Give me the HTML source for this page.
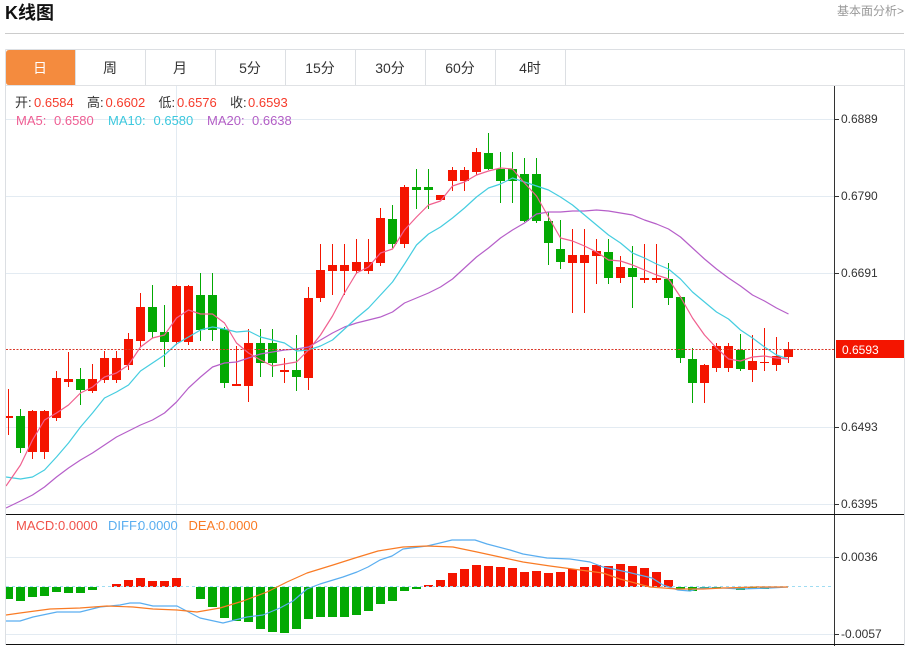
<!DOCTYPE html>
<html lang="zh"><head><meta charset="utf-8"><title>K线图</title>
<style>
html,body{margin:0;padding:0;background:#fff;width:911px;height:646px;overflow:hidden}
svg{position:absolute;left:0;top:0;display:block}
text{font-family:"Liberation Sans","Noto Sans CJK SC",sans-serif}
</style></head><body>
<svg width="911" height="646" viewBox="0 0 911 646" xmlns="http://www.w3.org/2000/svg">
<defs><clipPath id="c"><rect x="6" y="86" width="828" height="560"/></clipPath></defs>
<text x="5" y="19" font-size="18" font-weight="700" fill="#111">K线图</text>
<text x="837" y="15" font-size="12" fill="#999">基本面分析&gt;</text>
<rect x="5" y="33" width="899" height="1" fill="#ccc"/>
<path d="M5.5 49.5H904.5V645.5M5.5 49.5V645" fill="none" stroke="#dcdfe3"/>
<path d="M6 85.500H904" stroke="#e0e2e5"/>
<path d="M6 53q0-3 3-3H75V85H9q-3 0-3-3z" fill="#f48b3e"/>
<path d="M75.500 50V85M145.500 50V85M215.500 50V85M285.500 50V85M355.500 50V85M425.500 50V85M495.500 50V85M565.500 50V85" stroke="#dcdfe3"/>
<g font-size="14" text-anchor="middle" fill="#333">
<text x="40" y="73" fill="#fff">日</text><text x="110" y="73">周</text><text x="180" y="73">月</text><text x="250" y="73">5分</text><text x="320" y="73">15分</text><text x="390" y="73">30分</text><text x="460" y="73">60分</text><text x="530" y="73">4时</text>
</g>
<path d="M6 119.500H834M6 196.500H834M6 273.500H834M6 427.500H834M6 504.500H834M6 557.500H834M6 634.500H834M176.500 86V644" stroke="#e3ebf2"/>
<g clip-path="url(#c)">
<g stroke="#f41500" fill="none">
<path d="M8.500 389V435M32.500 410V459M44.500 410V459M56.500 371V421M68.500 352V387M92.500 364V393M104.500 351V383M116.500 351V383M128.500 333V370M140.500 293V347M176.500 285V345M188.500 285V345M236.500 346V386M248.500 329V402M284.500 358V383M308.500 287V390M320.500 244V302M332.500 244V295M344.500 244V295M356.500 239V274M368.500 239V274M380.500 208V266M404.500 185V248M452.500 167V191M464.500 167V191M476.500 148V175M572.500 229V313M584.500 229V313M596.500 239V284M620.500 256V283M644.500 244V283M656.500 244V283M704.500 364V403M716.500 343V372M728.500 343V372M752.500 335V382M764.500 328V371M776.500 337V371M788.500 342V363"/>
</g>
<path fill="#f41500" d="M4 416h9v2h-9zM28 411h9v41h-9zM40 411h9v41h-9zM52 378h9v40h-9zM64 379h9v3h-9zM88 379h9v12h-9zM100 358h9v22h-9zM112 358h9v22h-9zM124 339h9v26h-9zM136 307h9v34h-9zM172 286h9v56h-9zM184 286h9v56h-9zM232 384h9v2h-9zM244 343h9v43h-9zM280 370h9v2h-9zM304 298h9v80h-9zM316 270h9v28h-9zM328 265h9v6h-9zM340 265h9v6h-9zM352 262h9v9h-9zM364 262h9v9h-9zM376 218h9v45h-9zM400 187h9v57h-9zM436 195h9v5h-9zM448 170h9v11h-9zM460 170h9v11h-9zM472 152h9v20h-9zM568 255h9v8h-9zM580 255h9v8h-9zM592 251h9v5h-9zM616 267h9v11h-9zM640 278h9v2h-9zM652 278h9v2h-9zM700 365h9v18h-9zM712 346h9v22h-9zM724 346h9v22h-9zM748 361h9v9h-9zM760 362h9v1h-9zM772 356h9v9h-9zM784 349h9v8h-9z"/>
<g stroke="#03a903" fill="none">
<path d="M20.500 409V453M80.500 368V405M152.500 285V338M164.500 305V367M200.500 273V341M212.500 273V341M224.500 327V388M260.500 329V377M272.500 329V377M296.500 335V391M392.500 205V248M416.500 169V209M428.500 169V209M488.500 133V170M500.500 152V203M512.500 152V203M524.500 158V222M536.500 158V223M548.500 212V265M560.500 220V269M608.500 239V284M632.500 246V308M668.500 263V305M680.500 296V363M692.500 348V403M740.500 334V371"/>
</g>
<path fill="#03a903" d="M16 416h9v32h-9zM76 379h9v11h-9zM148 307h9v25h-9zM160 332h9v10h-9zM196 295h9v35h-9zM208 295h9v35h-9zM220 329h9v54h-9zM256 343h9v20h-9zM268 343h9v20h-9zM292 370h9v7h-9zM388 219h9v25h-9zM412 187h9v3h-9zM424 187h9v3h-9zM484 153h9v16h-9zM496 169h9v12h-9zM508 169h9v12h-9zM520 174h9v47h-9zM532 174h9v47h-9zM544 221h9v22h-9zM556 249h9v13h-9zM604 252h9v26h-9zM628 268h9v9h-9zM664 279h9v19h-9zM676 297h9v61h-9zM688 359h9v24h-9zM736 350h9v19h-9z"/>
<g fill="none" stroke-width="1.200" stroke-linejoin="round">
<polyline stroke="#b65fc9" points="6,508 20.500,501 32.500,495 44.500,487 56.500,477 68.500,468 80.500,460 92.500,453 104.500,445 116.500,437 128.500,431 140.500,425 152.500,420 164.500,413 176.500,402 188.500,388 200.500,377 212.500,367 224.500,363 236.500,362 248.500,358 260.500,354 272.500,352 284.500,350 296.500,349 308.500,347 320.500,340 332.500,333 344.500,327 356.500,323 368.500,320 380.500,317 392.500,312 404.500,303 416.500,298 428.500,293 440.500,287 452.500,279 464.500,268 476.500,257 488.500,248 500.500,238 512.500,230 524.500,223 536.500,214 548.500,212 560.500,212 572.500,211 584.500,211 596.500,210 608.500,211 620.500,213 632.500,215 644.500,220 656.500,224 668.500,229 680.500,237 692.500,248 704.500,259 716.500,269 728.500,278 740.500,286 752.500,295 764.500,301 776.500,308 788.500,314"/>
<polyline stroke="#45cde0" points="6,477 20.500,479 32.500,477 44.500,470 56.500,457 68.500,443 80.500,427 92.500,413 104.500,398 116.500,392 128.500,385 140.500,371 152.500,363 164.500,355 176.500,344 188.500,337 200.500,330 212.500,327 224.500,329 236.500,332 248.500,331 260.500,337 272.500,340 284.500,343 296.500,351 308.500,350 320.500,346 332.500,340 344.500,329 356.500,318 368.500,308 380.500,295 392.500,282 404.500,264 416.500,245 428.500,234 440.500,227 452.500,218 464.500,208 476.500,197 488.500,188 500.500,184 512.500,178 524.500,182 536.500,186 548.500,190 560.500,197 572.500,205 584.500,215 596.500,225 608.500,235 620.500,243 632.500,253 644.500,258 656.500,264 668.500,269 680.500,279 692.500,292 704.500,302 716.500,312 728.500,319 740.500,330 752.500,338 764.500,347 776.500,355 788.500,359"/>
<polyline stroke="#f0608f" points="6,486 20.500,465 32.500,440 44.500,420 56.500,413 68.500,405 80.500,393 92.500,387 104.500,377 116.500,373 128.500,365 140.500,347 152.500,338 164.500,335 176.500,318 188.500,310 200.500,314 212.500,314 224.500,323 236.500,343 248.500,353 260.500,360 272.500,366 284.500,364 296.500,362 308.500,350 320.500,335 332.500,316 344.500,293 356.500,273 368.500,267 380.500,253 392.500,249 404.500,230 416.500,217 428.500,205 440.500,201 452.500,186 464.500,182 476.500,175 488.500,171 500.500,168 512.500,169 524.500,183 536.500,196 548.500,217 560.500,238 572.500,241 584.500,246 596.500,252 608.500,260 620.500,261 632.500,265 644.500,270 656.500,275 668.500,279 680.500,297 692.500,318 704.500,335 716.500,348 728.500,359 740.500,361 752.500,357 764.500,356 776.500,358 788.500,359"/>
</g>
<path fill="#03a903" d="M4 587h9v12h-9zM16 587h9v14h-9zM28 587h9v10h-9zM40 587h9v9h-9zM52 587h9v5h-9zM64 587h9v6h-9zM76 587h9v6h-9zM88 587h9v3h-9zM196 587h9v12h-9zM208 587h9v20h-9zM220 587h9v31h-9zM232 587h9v34h-9zM244 587h9v35h-9zM256 587h9v42h-9zM268 587h9v45h-9zM280 587h9v46h-9zM292 587h9v42h-9zM304 587h9v32h-9zM316 587h9v30h-9zM328 587h9v30h-9zM340 587h9v30h-9zM352 587h9v28h-9zM364 587h9v24h-9zM376 587h9v17h-9zM388 587h9v14h-9zM400 587h9v4h-9zM412 587h9v2h-9zM676 587h9v2h-9zM688 587h9v4h-9zM700 587h9v1h-9zM712 587h9v1h-9zM736 587h9v3h-9zM748 587h9v2h-9zM760 587h9v2h-9z"/>
<path fill="#f41500" d="M112 584h9v3h-9zM124 580h9v7h-9zM136 578h9v9h-9zM148 581h9v6h-9zM160 581h9v6h-9zM172 578h9v9h-9zM424 585h9v2h-9zM436 580h9v7h-9zM448 573h9v14h-9zM460 569h9v18h-9zM472 565h9v22h-9zM484 566h9v21h-9zM496 567h9v20h-9zM508 568h9v19h-9zM520 572h9v15h-9zM532 571h9v16h-9zM544 573h9v14h-9zM556 572h9v15h-9zM568 569h9v18h-9zM580 567h9v20h-9zM592 565h9v22h-9zM604 566h9v21h-9zM616 564h9v23h-9zM628 566h9v21h-9zM640 568h9v19h-9zM652 572h9v15h-9zM664 580h9v7h-9z"/>
<path d="M6 586.500H834" stroke="#9fdcf2" stroke-dasharray="3 3"/>
<g fill="none" stroke-width="1.200" stroke-linejoin="round">
<polyline stroke="#5aaef0" points="6,621 20,621 33,617 57,612 80,612 100,607 120,605 130,603 140,603 153,606 177,606 200,618 223,623 247,617 263,615 280,608 293,601 307,589 320,584 343,577 357,572 368,567 380,560 392,556 403,549 427,546 440,543 452,540 475,540 487,544 510,550 523,554 547,558 570,559 590,562 603,567 627,572 652,578 663,585 678,590 690,591 700,588 723,588 740,589 770,588 788,587"/>
<polyline stroke="#f97b25" points="6,615 20,613 50,609 80,608 107,606 133,607 153,609 177,610 197,612 220,608 243,601 267,592 287,582 307,573 320,569 333,565 355,558 378,551 403,547 427,546 453,547 477,552 500,557 523,562 550,566 580,570 603,573 620,579 650,587 677,589 703,589 723,588 757,587 788,587"/>
</g>
<path d="M6 349.500H834" stroke="#d93a2b" stroke-dasharray="2 1.500"/>
</g>
<path d="M834.500 86V646" stroke="#333"/>
<path d="M6 514.500H904M6 644.500H904" stroke="#111"/>
<path d="M834 119.500h5M834 196.500h5M834 273.500h5M834 427.500h5M834 504.500h5M834 557.500h5M834 634.500h5" stroke="#333"/>
<rect x="836" y="340" width="68" height="18" fill="#f41500"/>
<g font-size="12" fill="#333">
<text x="841" y="123">0.6889</text><text x="841" y="200">0.6790</text><text x="841" y="277">0.6691</text><text x="841" y="431">0.6493</text><text x="841" y="508">0.6395</text><text x="841" y="561">0.0036</text><text x="841" y="638">-0.0057</text>
</g>
<text x="842" y="354" font-size="12" fill="#fff">0.6593</text>
<g font-size="13">
<text x="15" y="107" fill="#333">开:</text><text x="34" y="107" fill="#f63b2b">0.6584</text>
<text x="87" y="107" fill="#333">高:</text><text x="105.500" y="107" fill="#f63b2b">0.6602</text>
<text x="158.500" y="107" fill="#333">低:</text><text x="177" y="107" fill="#f63b2b">0.6576</text>
<text x="230" y="107" fill="#333">收:</text><text x="248" y="107" fill="#f63b2b">0.6593</text>
<text x="16" y="125" fill="#ef5e93">MA5:</text><text x="54" y="125" fill="#ef5e93">0.6580</text>
<text x="108" y="125" fill="#3dc8de">MA10:</text><text x="153.500" y="125" fill="#3dc8de">0.6580</text>
<text x="207" y="125" fill="#b35ec6">MA20:</text><text x="252" y="125" fill="#b35ec6">0.6638</text>
<text x="16" y="530" fill="#f0524a">MACD:</text><text x="58" y="530" fill="#f0524a">0.0000</text>
<text x="108" y="530" fill="#5aaef0">DIFF:</text><text x="138" y="530" fill="#5aaef0">0.0000</text>
<text x="188.500" y="530" fill="#f97b25">DEA:</text><text x="218" y="530" fill="#f97b25">0.0000</text>
</g>
</svg>
</body></html>
